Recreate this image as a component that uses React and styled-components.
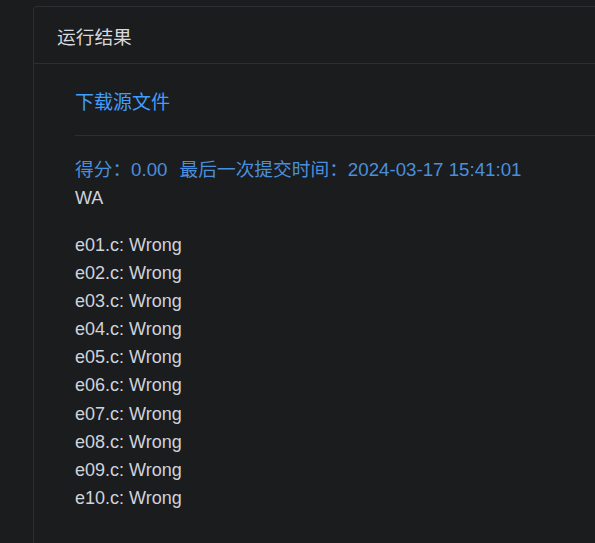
import styled, { createGlobalStyle } from "styled-components";

const GlobalStyle = createGlobalStyle`
  html, body {
    margin: 0;
    padding: 0;
    background: #1b1c1e;
    overflow: hidden;
  }
  body {
    font-family: "Liberation Sans", "Noto Sans CJK SC", sans-serif;
    color: #cfd3dc;
  }
`;

const Page = styled.div`
  width: 595px;
  height: 543px;
  padding: 6px 0 0 33px;
  box-sizing: border-box;
  overflow: hidden;
`;

const Card = styled.div`
  width: 640px;
  min-height: 600px;
  border: 1px solid #2d2e31;
  border-radius: 4px;
  background: #1b1c1e;
`;

const CardHeader = styled.div`
  height: 56px;
  display: flex;
  align-items: center;
  padding: 0 23px;
  border-bottom: 1px solid #2d2e31;
  font-size: 18.72px;
  color: #d8d9dc;
`;

const CardBody = styled.div`
  padding: 25px 0 0 41px;
`;

const DownloadLink = styled.a`
  display: block;
  line-height: 28px;
  font-size: 19px;
  color: #409eff;
  text-decoration: none;
  cursor: pointer;
`;

const Divider = styled.hr`
  margin: 18px 0 0;
  border: none;
  border-top: 1px solid #2d2e31;
`;

const ScoreLine = styled.div`
  margin-top: 20px;
  line-height: 28px;
  font-size: 18.72px;
  color: #4a8fdc;
  white-space: nowrap;
`;

const ScoreItem = styled.span`
  margin-left: ${(p) => (p.gap ? "12px" : "0")};
`;

const Verdict = styled.div`
  line-height: 28px;
  font-size: 18px;
`;

const CaseList = styled.div`
  margin-top: 19px;
  display: flex;
  flex-direction: column;
`;

const CaseRow = styled.div`
  line-height: 28.1px;
  font-size: 18px;
`;

const cases = ["e01", "e02", "e03", "e04", "e05", "e06", "e07", "e08", "e09", "e10"];

export default function App() {
  return (
    <>
      <GlobalStyle />
      <Page>
        <Card>
          <CardHeader>运行结果</CardHeader>
          <CardBody>
            <DownloadLink>下载源文件</DownloadLink>
            <Divider />
            <ScoreLine>
              <ScoreItem>得分：0.00</ScoreItem>
              <ScoreItem gap>最后一次提交时间：2024-03-17 15:41:01</ScoreItem>
            </ScoreLine>
            <Verdict>WA</Verdict>
            <CaseList>
              {cases.map((c) => (
                <CaseRow key={c}>{c}.c: Wrong</CaseRow>
              ))}
            </CaseList>
          </CardBody>
        </Card>
      </Page>
    </>
  );
}
